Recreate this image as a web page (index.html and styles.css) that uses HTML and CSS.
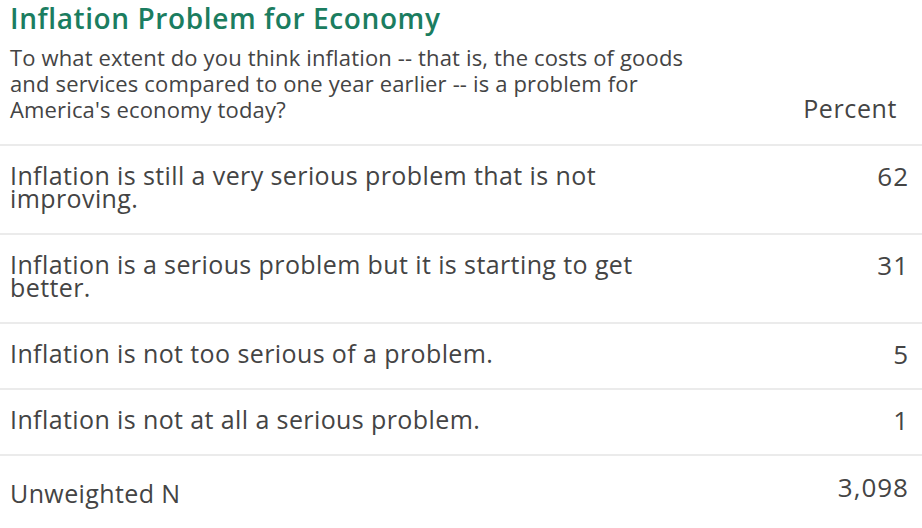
FILE: index.html
```html
<!DOCTYPE html>
<html>
<head>
<meta charset="utf-8">
<link rel="stylesheet" href="styles.css">
</head>
<body>
<div class="table">
  <div class="head">
    <div class="head-left">
      <h1 class="title">Inflation Problem for Economy</h1>
      <p class="question">To what extent do you think inflation -- that is, the costs of goods and services compared to one year earlier -- is a problem for America's economy today?</p>
    </div>
    <div class="col-label">Percent</div>
  </div>
  <div class="row">
    <div class="label">Inflation is still a very serious problem that is not improving.</div>
    <div class="value">62</div>
  </div>
  <div class="row">
    <div class="label">Inflation is a serious problem but it is starting to get better.</div>
    <div class="value">31</div>
  </div>
  <div class="row">
    <div class="label">Inflation is not too serious of a problem.</div>
    <div class="value">5</div>
  </div>
  <div class="row">
    <div class="label">Inflation is not at all a serious problem.</div>
    <div class="value">1</div>
  </div>
  <div class="row row-n">
    <div class="label">Unweighted N</div>
    <div class="value">3,098</div>
  </div>
</div>
</body>
</html>
```
FILE: styles.css
```css
html, body {
  margin: 0;
  padding: 0;
  background: #ffffff;
}
body {
  font-family: "Open Sans", "Noto Sans", sans-serif;
  color: #444444;
}
.table {
  width: 922px;
}
.head {
  display: flex;
  justify-content: space-between;
  align-items: last baseline;
  padding: 1px 26px 22px 10px;
  border-bottom: 2px solid #ebebeb;
}
.head-left {
  width: 700px;
}
.title {
  margin: 0;
  font-size: 28px;
  line-height: 34px;
  font-weight: 600;
  letter-spacing: 0.6px;
  color: #1b7d60;
}
.question {
  margin: 9px 0 0;
  font-size: 22px;
  line-height: 26px;
  letter-spacing: 0.15px;
}
.col-label {
  font-size: 25px;
  line-height: 26px;
  letter-spacing: 0.6px;
  margin-right: -1px;
}
.row {
  display: flex;
  justify-content: space-between;
  align-items: flex-start;
  padding: 18px 14px 23px 10px;
  border-bottom: 2px solid #ebebeb;
  font-size: 25px;
  line-height: 23px;
  letter-spacing: 0.4px;
}
.label {
  width: 660px;
}
.value {
  font-size: 26px;
  line-height: 22px;
  letter-spacing: 1px;
  margin-top: 1px;
  margin-right: -1px;
}
.row-n {
  border-bottom: none;
  padding-top: 26px;
}
.row-n .value {
  margin-top: -6px;
}
```
